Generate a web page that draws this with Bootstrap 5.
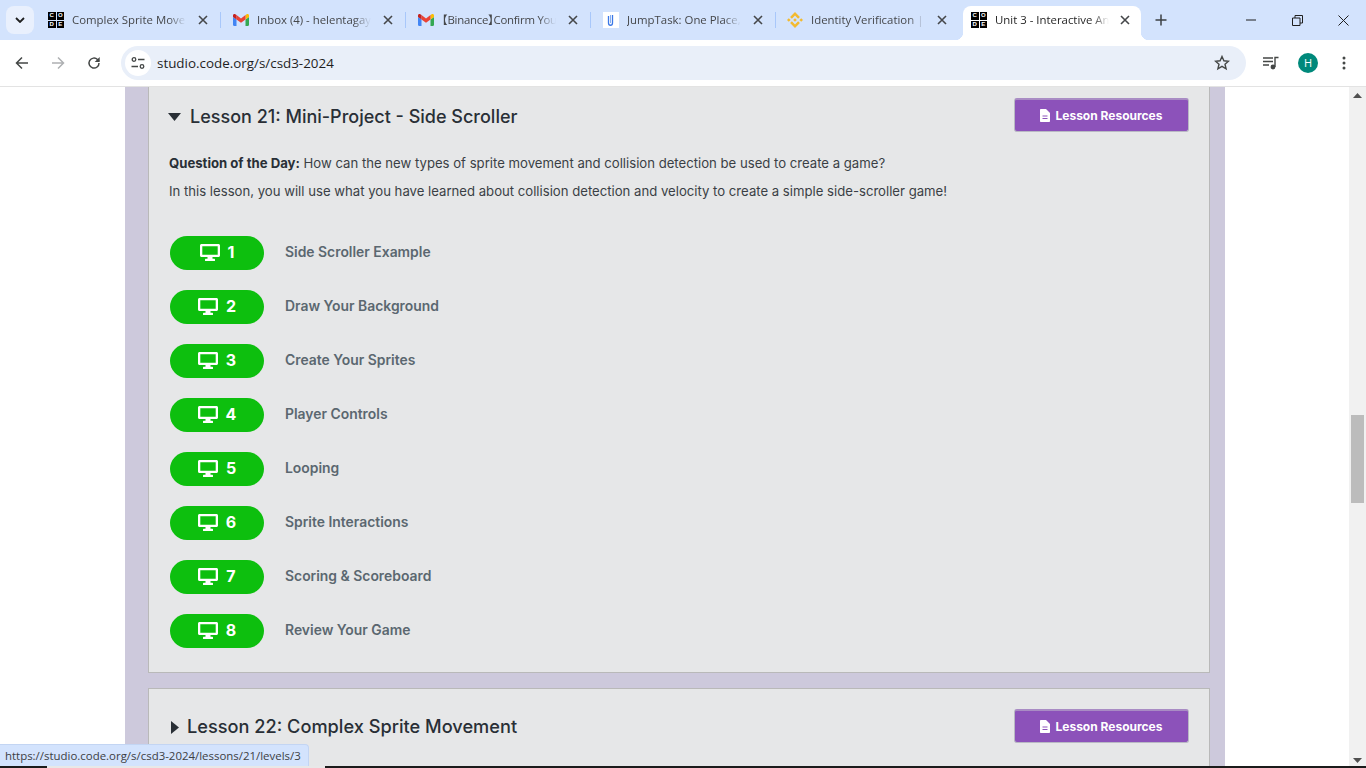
<!DOCTYPE html>
<html>
<head>
<title>Unit 3 - Interactive Animations</title>
<link href="https://cdn.jsdelivr.net/npm/bootstrap@5.3.3/dist/css/bootstrap.min.css" rel="stylesheet">
<style>
  html, body { height: 768px; overflow: hidden; background: #fff; }
  body { font-family: "Open Sans", "Liberation Sans", sans-serif; position: relative; }

  /* browser frame */
  .tabstrip { height: 40px; background: #d3e3fd; padding-left: 6px; }
  .tabmenu { width: 28px; height: 28px; margin-top: 6px; margin-right: 2px; background: #e9f0fd; border-radius: 8px; }
  .tabitem { width: 185px; height: 40px; padding-left: 12px; padding-right: 10px; color: #45474a; font-size: 11.4px; position: relative; }
  .tabitem::after { content: ""; position: absolute; right: 0; top: 12px; height: 16px; width: 1px; background: #a8c7fa; }
  .tabitem.nosep { padding-left: 11px; padding-right: 11px; }
  .tabitem.nosep::after { display: none; }
  .tabicon { width: 16px; height: 16px; flex: none; margin-right: 8px; }
  .tabtext { width: 114px; white-space: nowrap; overflow: hidden; flex: none; -webkit-mask-image: linear-gradient(to right, #000 85%, transparent); mask-image: linear-gradient(to right, #000 85%, transparent); }
  .tabtight { font-family: "Open Sans", "Noto Sans CJK JP", sans-serif; font-feature-settings: "halt"; letter-spacing: -.25px; }
  .tabx { margin-left: auto; width: 16px; height: 16px; flex: none; }
  .tabactive { width: 178px; height: 34px; margin-top: 6px; margin-left: 2px; margin-right: 14px; background: #fff; border-radius: 8px 8px 0 0; padding: 0 8px 6px; color: #1f1f1f; font-size: 11.4px; position: relative; }
  .tabactive::before, .tabactive::after { content: ""; position: absolute; bottom: 0; width: 8px; height: 8px; }
  .tabactive::before { left: -8px; background: radial-gradient(circle at 0 0, transparent 8px, #fff 8.5px); }
  .tabactive::after { right: -8px; background: radial-gradient(circle at 100% 0, transparent 8px, #fff 8.5px); }
  .tabplus { margin-top: 14px; }
  .winbtn { width: 46px; height: 40px; }
  .toolbar { background: #fff; border-bottom: 1px solid #e3e3e3; height: 47px; padding-left: 4px; }
  .toolbtn { width: 36px; height: 36px; flex: none; }
  .omnibox { width: 1125px; height: 34px; margin-left: 9px; background: #e9eff9; border-radius: 17px; padding-left: 2px; padding-right: 16px; font-size: 13.4px; color: #1f1f1f; }
  .sitechip { width: 26px; height: 26px; border-radius: 50%; background: #fff; margin-left: 2px; margin-right: 6px; }
  .avatar { width: 20px; height: 20px; border-radius: 50%; background: #00897b; color: #fff; font-size: 11px; line-height: 20px; text-align: center; margin-left: 19px; }
  .playicon { margin-left: 17px; }
  .dotsicon { margin-left: 24px; }

  /* code.org favicon */
  .codefav { display: grid; grid-template-columns: 7.5px 7.5px; grid-template-rows: 7.5px 7.5px; gap: 1px; width: 16px; height: 16px; flex: none; margin-right: 8px; }
  .codefav span { background: #000; color: #fff; font-family: "Liberation Sans", sans-serif; font-size: 6px; font-weight: 700; line-height: 7.5px; text-align: center; }

  /* page */
  .pagearea { height: 681px; overflow: hidden; }
  .pagescroll { flex: 1; height: 681px; overflow: hidden; padding-left: 125px; }
  .purplecol { width: 1100px; background: #cdc9dc; padding: 0 15px 0 23px; }
  .lessoncard { background: #e6e7e8; border: 1px solid #b9b9b9; border-top: 0; padding: 11px 20px 0; margin-bottom: 15px; font-family: "Inter", "Open Sans", sans-serif; }
  .lessoncard.closedcard { border-top: 1px solid #b9b9b9; padding-top: 20px; margin-bottom: 0; height: 120px; }
  .lessonhead { height: 34px; color: #292f36; font-size: 18px; font-weight: 500; }
  .lessonhead > span { padding-top: 2px; }
  .closedcard .lessonhead > span { font-size: 18.2px; }
  .caretdown { width: 13px; height: 8px; margin-left: -1px; margin-right: 9px; margin-top: 3px; }
  .caretright { width: 8px; height: 13px; margin-left: 2px; margin-right: 8px; margin-top: 2px; }
  .resbtn { width: 175px; height: 34px; margin-left: auto; background: #8c52ba; border: 1px solid #b9b9c4; border-top: 2px solid #a98cc4; border-radius: 3px; color: #fff; font-size: 12px; font-weight: 700; }
  .resbtn svg { margin-right: 5px; }
  .lessontext { font-size: 13.15px; color: #3a3f45; line-height: 20px; margin: 0 0 8px; }
  .lessontext b { color: #292f36; font-weight: 700; }
  .introtext { margin-top: 21px; }
  .levelgroup { margin-top: 35px; padding-bottom: 24px; }
  .levelrow { height: 34px; margin-bottom: 20px; margin-left: 1px; }
  .levelrow:last-child { margin-bottom: 0; }
  .levelpill { width: 94px; height: 34px; border-radius: 17px; background: #0dbf0e; color: #fff; font-size: 16px; font-weight: 700; gap: 8px; }
  .levelpill svg { margin-top: -1px; }
  .levelpill span { padding-bottom: 2px; }
  .levelname { margin-left: 21px; margin-top: -2px; font-size: 13.9px; font-weight: 600; color: #5b6770; }
  .sidebar { width: 17px; background: #f1f1f1; flex: none; position: relative; }
  .sidebar svg { position: absolute; left: 4px; }
  .sidethumb { position: absolute; left: 2px; top: 328px; width: 13px; height: 88px; background: #bcbcbc; }

  /* status bubble */
  .statusbub { position: absolute; left: 0; bottom: 2px; height: 22px; background: #d3e3fd; border: 1px solid #c3d5f3; border-left: 0; border-bottom: 0; border-radius: 0 4px 0 0; padding: 0 7px 0 5px; font-size: 11.45px; line-height: 21px; color: #3c4043; }
  .taskline { position: absolute; left: 0; right: 0; bottom: 0; height: 2px; background: #1b1b1b; }
  .taskline span { position: absolute; left: 47px; width: 278px; height: 2px; background: #e8e8e8; top: 0; }
</style>
</head>
<body>

<!-- icon symbols, reused in the tabs and buttons -->
<svg width="0" height="0" class="d-block">
  <symbol id="gmailicon" viewBox="0 0 16 12">
    <path d="M1 12h2.500V5.500L0 3v7.800C0 11.500.5 12 1 12z" fill="#4285f4"/>
    <path d="M12.500 12H15c.6 0 1-.5 1-1.200V3l-3.500 2.500z" fill="#34a853"/>
    <path d="M12.500 1v4.500L16 3V1.500C16 .2 14.600-.4 13.700.3z" fill="#fbbc04"/>
    <path d="M3.500 5.500V1L8 4.400 12.500 1v4.500L8 8.800z" fill="#ea4335"/>
    <path d="M0 1.500V3l3.500 2.500V1L2.300.3C1.400-.4 0 .2 0 1.500z" fill="#c5221f"/>
  </symbol>
  <symbol id="xicon" viewBox="0 0 16 16">
    <path d="M4 4l8 8M12 4l-8 8" stroke="#45474a" stroke-width="1.600" fill="none"/>
  </symbol>
  <symbol id="monitoricon" viewBox="0 0 20 17">
    <path fill-rule="evenodd" d="M1.500 0h17c.8 0 1.500.7 1.500 1.500v10c0 .8-.7 1.500-1.500 1.500h-17C.7 13 0 12.300 0 11.500v-10C0 .7.700 0 1.500 0zM2.300 2.300v8.400h15.400V2.300z" fill="#fff"/>
    <rect x="7.500" y="13" width="5" height="2.500" fill="#fff"/>
    <rect x="5" y="14.800" width="10" height="2.200" rx=".6" fill="#fff"/>
  </symbol>
  <symbol id="fileicon" viewBox="0 0 10 13">
    <path fill-rule="evenodd" d="M1 0h5l4 4v8c0 .6-.4 1-1 1H1c-.6 0-1-.4-1-1V1c0-.6.4-1 1-1zM2.500 6.500v1h5v-1zM2.500 9v1h5V9z" fill="#fff"/>
  </symbol>
</svg>

<!-- tab strip -->
<div class="tabstrip d-flex align-items-start">
  <div class="tabmenu d-flex align-items-center justify-content-center">
    <svg width="10" height="6" viewBox="0 0 10 6"><path d="M1 1l4 4 4-4" stroke="#1f1f1f" stroke-width="1.800" fill="none"/></svg>
  </div>
  <div class="tabitem d-flex align-items-center">
    <div class="codefav"><span>C</span><span>O</span><span>D</span><span>E</span></div>
    <span class="tabtext">Complex Sprite Move</span>
    <svg class="tabx"><use href="#xicon"/></svg>
  </div>
  <div class="tabitem d-flex align-items-center">
    <svg class="tabicon" viewBox="0 0 16 16"><use href="#gmailicon" y="2" width="16" height="12"/></svg>
    <span class="tabtext">Inbox (4) - helentagay</span>
    <svg class="tabx"><use href="#xicon"/></svg>
  </div>
  <div class="tabitem d-flex align-items-center">
    <svg class="tabicon" viewBox="0 0 16 16"><use href="#gmailicon" y="2" width="16" height="12"/></svg>
    <span class="tabtext tabtight">【Binance】Confirm You</span>
    <svg class="tabx"><use href="#xicon"/></svg>
  </div>
  <div class="tabitem d-flex align-items-center">
    <svg class="tabicon" viewBox="0 0 16 16">
      <rect width="16" height="16" fill="#fff"/>
      <path d="M5.500 4v7c0 3 4 3 4 0V3" stroke="#3b78e7" stroke-width="1.300" fill="none"/>
      <path d="M7.500 3v8" stroke="#8ab0ee" stroke-width="1" fill="none"/>
    </svg>
    <span class="tabtext">JumpTask: One Place,</span>
    <svg class="tabx"><use href="#xicon"/></svg>
  </div>
  <div class="tabitem nosep d-flex align-items-center">
    <svg class="tabicon" viewBox="0 0 126.610 126.610" fill="#f3ba2f">
      <path d="M38.730 53.200l24.590-24.580 24.600 24.600 14.300-14.310L63.320 0 24.430 38.900z"/>
      <path d="M0 63.310l14.300-14.310 14.310 14.310-14.310 14.300z"/>
      <path d="M38.730 73.410l24.590 24.590 24.600-24.600 14.310 14.290-38.900 38.910-38.910-38.880z"/>
      <path d="M98 63.310l14.300-14.310 14.310 14.300-14.310 14.320z"/>
      <path d="M77.830 63.300L63.320 48.780 48.810 63.280l14.510 14.500z"/>
    </svg>
    <span class="tabtext">Identity Verification |</span>
    <svg class="tabx"><use href="#xicon"/></svg>
  </div>
  <div class="tabactive d-flex align-items-center">
    <div class="codefav"><span>C</span><span>O</span><span>D</span><span>E</span></div>
    <span class="tabtext">Unit 3 - Interactive An</span>
    <svg class="tabx"><use href="#xicon"/></svg>
  </div>
  <svg class="tabplus" width="12" height="12" viewBox="0 0 12 12"><path d="M6 .5v11M.5 6h11" stroke="#3c4043" stroke-width="1.500"/></svg>
  <div class="d-flex ms-auto">
    <div class="winbtn d-flex align-items-center justify-content-center">
      <svg width="10" height="2" viewBox="0 0 10 2"><path d="M0 1h10" stroke="#1f1f1f"/></svg>
    </div>
    <div class="winbtn d-flex align-items-center justify-content-center">
      <svg width="11" height="11" viewBox="0 0 11 11"><path d="M.5 3h7.500v7.500H.5zM3 3V.5h7.500V8H8" stroke="#1f1f1f" fill="none"/></svg>
    </div>
    <div class="winbtn d-flex align-items-center justify-content-center">
      <svg width="11" height="11" viewBox="0 0 11 11"><path d="M.5.5l10 10M10.500.5l-10 10" stroke="#1f1f1f" fill="none"/></svg>
    </div>
  </div>
</div>

<!-- toolbar -->
<div class="toolbar d-flex align-items-center">
  <div class="toolbtn d-flex align-items-center justify-content-center">
    <svg width="14" height="14" viewBox="0 0 14 14"><path d="M13 7H2M7 1.500L1.500 7 7 12.500" stroke="#444746" stroke-width="1.500" fill="none"/></svg>
  </div>
  <div class="toolbtn d-flex align-items-center justify-content-center">
    <svg width="14" height="14" viewBox="0 0 14 14"><path d="M1 7h11M7 1.500L12.500 7 7 12.500" stroke="#aeb0b2" stroke-width="1.500" fill="none"/></svg>
  </div>
  <div class="toolbtn d-flex align-items-center justify-content-center">
    <svg width="14" height="14" viewBox="0 0 14 14"><path d="M12 7a5 5 0 1 1-1.500-3.500L12 5" stroke="#444746" stroke-width="1.500" fill="none"/><path d="M12.700 1v5h-5z" fill="#444746"/></svg>
  </div>
  <div class="omnibox d-flex align-items-center">
    <div class="sitechip d-flex align-items-center justify-content-center">
      <svg width="14" height="14" viewBox="0 0 14 14" fill="none" stroke="#444746" stroke-width="1.300"><circle cx="3" cy="3.500" r="1.800"/><path d="M7 3.500h6.500M.5 10.500H7"/><circle cx="11" cy="10.500" r="1.800"/></svg>
    </div>
    <span>studio.code.org/s/csd3-2024</span>
    <svg class="ms-auto" width="16" height="16" viewBox="0 0 16 16"><path d="M8 1.500l1.900 4.300 4.600.4-3.500 3 1.100 4.600L8 11.400l-4.100 2.400L5 9.200l-3.500-3 4.600-.4z" stroke="#444746" stroke-width="1.400" fill="none"/></svg>
  </div>
  <div class="d-flex align-items-center flex-grow-1">
    <svg class="playicon" width="16" height="14" viewBox="0 0 16 14" fill="none" stroke="#444746" stroke-width="1.400"><path d="M0 2h10M0 5.500h10M0 9h6"/><path d="M12 11V1.500h3.500"/><circle cx="10" cy="11" r="1.700" fill="#444746"/></svg>
    <div class="avatar">H</div>
    <svg class="dotsicon" width="4" height="14" viewBox="0 0 4 14" fill="#444746"><circle cx="2" cy="2" r="1.500"/><circle cx="2" cy="7" r="1.500"/><circle cx="2" cy="12" r="1.500"/></svg>
  </div>
</div>

<!-- page -->
<div class="pagearea d-flex">
  <div class="pagescroll">
    <div class="purplecol">
      <div class="lessoncard">
        <div class="lessonhead d-flex align-items-center">
          <svg class="caretdown" viewBox="0 0 13 8"><path d="M0 0h13L6.500 8z" fill="#292f36"/></svg>
          <span>Lesson 21: Mini-Project - Side Scroller</span>
          <button class="resbtn d-flex align-items-center justify-content-center p-0">
            <svg width="10" height="13"><use href="#fileicon"/></svg>Lesson Resources
          </button>
        </div>
        <p class="lessontext introtext"><b>Question of the Day:</b> How can the new types of sprite movement and collision detection be used to create a game?</p>
        <p class="lessontext">In this lesson, you will use what you have learned about collision detection and velocity to create a simple side-scroller game!</p>
        <div class="levelgroup" id="levels"></div>
      </div>
      <div class="lessoncard closedcard">
        <div class="lessonhead d-flex align-items-center">
          <svg class="caretright" viewBox="0 0 8 13"><path d="M0 0l8 6.500L0 13z" fill="#292f36"/></svg>
          <span>Lesson 22: Complex Sprite Movement</span>
          <button class="resbtn d-flex align-items-center justify-content-center p-0">
            <svg width="10" height="13"><use href="#fileicon"/></svg>Lesson Resources
          </button>
        </div>
      </div>
    </div>
  </div>
  <div class="sidebar">
    <svg style="top:6px" width="9" height="5" viewBox="0 0 9 5"><path d="M0 5h9L4.500 0z" fill="#505050"/></svg>
    <div class="sidethumb"></div>
    <svg style="bottom:5px" width="9" height="5" viewBox="0 0 9 5"><path d="M0 0h9L4.500 5z" fill="#505050"/></svg>
  </div>
</div>

<div class="taskline"><span></span></div>
<div class="statusbub">https://studio.code.org/s/csd3-2024/lessons/21/levels/3</div>

<script src="https://cdn.jsdelivr.net/npm/bootstrap@5.3.3/dist/js/bootstrap.bundle.min.js"></script>
<script>
  const levels = ["Side Scroller Example", "Draw Your Background", "Create Your Sprites", "Player Controls", "Looping", "Sprite Interactions", "Scoring & Scoreboard", "Review Your Game"];
  const box = document.getElementById("levels");
  levels.forEach((name, i) => {
    const row = document.createElement("div");
    row.className = "levelrow d-flex align-items-center";
    const pill = document.createElement("div");
    pill.className = "levelpill d-flex align-items-center justify-content-center";
    pill.innerHTML = '<svg width="20" height="17"><use href="#monitoricon"/></svg><span>' + (i + 1) + '</span>';
    const label = document.createElement("span");
    label.className = "levelname";
    label.innerText = name;
    row.appendChild(pill);
    row.appendChild(label);
    box.appendChild(row);
  });
</script>
</body>
</html>
